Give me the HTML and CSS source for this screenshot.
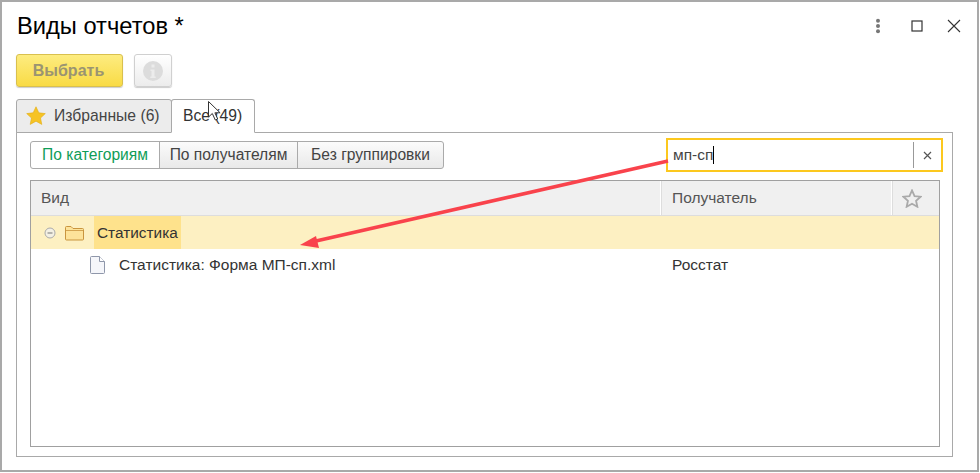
FILE: index.html
```html
<!DOCTYPE html>
<html lang="ru">
<head>
<meta charset="utf-8">
<title>Виды отчетов</title>
<link rel="stylesheet" href="styles.css">
</head>
<body>
<div class="window">
  <header class="titlebar">
    <h1 class="title">Виды отчетов *</h1>
    <div class="win-controls">
      <svg class="win-icon" width="12" height="16" viewBox="0 0 12 16"><circle cx="6" cy="2.700" r="2" fill="#777"/><circle cx="6" cy="8" r="2" fill="#777"/><circle cx="6" cy="13.300" r="2" fill="#777"/></svg>
      <svg class="win-icon icon-max" width="12" height="12" viewBox="0 0 12 12"><rect x="1" y="1" width="10" height="10" fill="none" stroke="#333" stroke-width="1.2"/></svg>
      <svg class="win-icon icon-close" width="14" height="14" viewBox="0 0 14 14"><path d="M1 1L13 13M13 1L1 13" fill="none" stroke="#333" stroke-width="1.1"/></svg>
    </div>
  </header>
  <div class="toolbar">
    <button class="btn-primary">Выбрать</button>
    <button class="btn-info">
      <svg width="20" height="20" viewBox="0 0 20 20"><circle cx="10" cy="10" r="10" fill="#dcdcdc"/><rect x="8.500" y="3.500" width="3" height="3" fill="#ececec"/><path d="M7.500 8.500h4v7h1.200v1.500H7.300v-1.500h1.200v-5.500h-1z" fill="#ececec"/></svg>
    </button>
  </div>
  <div class="tabs">
    <div class="tab tab-inactive">
      <svg width="20" height="20" viewBox="0 0 20 20"><path d="M10 .8l2.800 6 6.500.8-4.800 4.400 1.300 6.400L10 15.200l-5.800 3.200 1.300-6.400L.7 7.600l6.500-.8z" fill="#f6c324" stroke="#e3ac12" stroke-width=".6"/></svg>
      <span>Избранные (6)</span>
    </div>
    <div class="tab tab-active">Все (49)</div>
  </div>
  <section class="panel">
    <div class="filters">
      <div class="segments">
        <div class="seg seg-1 seg-on">По категориям</div>
        <div class="seg seg-2">По получателям</div>
        <div class="seg seg-3">Без группировки</div>
      </div>
      <div class="search">
        <div class="search-text"><span>мп-сп</span><i class="caret"></i></div>
        <div class="search-clear">
          <svg width="9" height="9" viewBox="0 0 9 9"><path d="M1 1L8 8M8 1L1 8" fill="none" stroke="#555" stroke-width="1.200"/></svg>
        </div>
      </div>
    </div>
    <div class="table">
      <div class="thead">
        <div class="th col-kind">Вид</div>
        <div class="th col-to">Получатель</div>
        <div class="th col-star">
          <svg width="20" height="19" viewBox="0 0 22 21"><path d="M11 1.600l2.800 6.200 6.700.7-5 4.500 1.400 6.600L11 16.300l-5.900 3.300 1.400-6.600-5-4.500 6.700-.7z" fill="none" stroke="#aaa" stroke-width="2"/></svg>
        </div>
      </div>
      <div class="row row-group">
        <svg class="toggle" width="12" height="12" viewBox="0 0 12 12"><circle cx="6" cy="6" r="5" fill="#f3f0e4" stroke="#aaa"/><path d="M3.500 6h5" stroke="#777"/></svg>
        <svg class="folder" width="19" height="16" viewBox="0 0 19 16"><path d="M.5 14V2.500q0-1 1-1h4.500l2 2h9.500q1 0 1 1V14q0 1-1 1h-16q-1 0-1-1z" fill="#fde39a" stroke="#c9953f"/><path d="M1 5.500h17" stroke="#c9953f" stroke-width=".8"/></svg>
        <span class="group-name">Статистика</span>
      </div>
      <div class="row row-item">
        <div class="item-kind">
          <svg class="doc" width="15" height="18" viewBox="0 0 15 18"><path d="M.5 1.500q0-1 1-1h8l5 5v11q0 1-1 1h-12q-1 0-1-1z" fill="#f5f6fa" stroke="#8f97aa"/><path d="M9.500.5v5h5" fill="#fff" stroke="#8f97aa"/></svg>
          <span>Статистика: Форма МП-сп.xml</span>
        </div>
        <div class="item-to">Росстат</div>
      </div>
    </div>
  </section>
</div>
<svg class="annotation" width="980" height="473" viewBox="0 0 980 473">
  <path d="M668 161L316 241" stroke="#f9434c" stroke-width="3.600" fill="none"/>
  <path d="M300 245L316 236L319 248z" fill="#f9434c"/>
  <path d="M208.500 101.500V117l3.800-3.500 3 6.500 2.400-1-2.800-6.200h5.200z" fill="#fff" stroke="#333" stroke-width="1"/>
</svg>
</body>
</html>
```
FILE: styles.css
```css
* { box-sizing: border-box; }
html, body { margin: 0; padding: 0; background: #fff; }
body { width: 980px; height: 473px; overflow: hidden; position: relative; font-family: "Liberation Sans", Arial, sans-serif; }
.window { width: 979px; height: 472px; border: 2px solid #a9a9a9; padding: 0 24px 0 14px; background: #fff; }
.titlebar { height: 52px; display: flex; align-items: center; justify-content: space-between; margin-right: -24px; }
.title { margin: 0 0 0 1px; font-weight: 400; font-size: 23.700px; color: #000; position: relative; top: -2px; }
.win-controls { display: flex; align-items: center; padding-right: 16px; position: relative; top: -2px; }
.icon-max { margin-left: 27px; }
.icon-close { margin-left: 24px; }
.toolbar { display: flex; gap: 11px; height: 33px; }
.btn-primary { width: 107px; height: 33px; border: 1px solid #d9c04e; border-radius: 3px; background: linear-gradient(#fdec80, #f9db45); color: #9a9472; font: 700 16px "Liberation Sans", sans-serif; box-shadow: 0 1px 1px #ccc; padding: 0 2px 0 0; }
.btn-info { width: 38px; height: 33px; border: 1px solid #d0d0d0; border-radius: 3px; background: linear-gradient(#fff, #ececec); padding: 0; display: flex; align-items: center; justify-content: center; box-shadow: 0 1px 1px #ccc; }
.tabs { display: flex; margin-top: 12px; height: 34px; position: relative; z-index: 1; }
.tab { height: 34px; border: 1px solid #a9a9a9; border-radius: 3px 3px 0 0; font-size: 15.700px; color: #444; display: flex; align-items: center; padding-bottom: 1px; }
.tab-inactive { width: 156px; background: #ececec; padding-left: 9px; gap: 8px; }
.tab-active { width: 84px; margin-left: -1px; background: #fff; border-bottom-color: #fff; padding-left: 11px; color: #333; }
.panel { width: 937px; height: 325px; margin-top: -1px; border: 1px solid #a9a9a9; padding: 5px 13px 0 13px; }
.filters { display: flex; justify-content: space-between; align-items: flex-start; height: 42px; margin-right: -4px; }
.segments { display: flex; margin-top: 3px; height: 28px; }
.seg { height: 28px; border: 1px solid #aaa; margin-left: -1px; font-size: 15.600px; display: flex; align-items: center; justify-content: center; color: #444; background: linear-gradient(#fbfbfb, #e9e9e9); }
.seg-1 { width: 130px; margin-left: 0; border-radius: 3px 0 0 3px; }
.seg-2 { width: 139px; }
.seg-3 { width: 147px; border-radius: 0 3px 3px 0; }
.seg-on { background: #fff; color: #0f9d58; }
.search { width: 277px; height: 34px; border: 2px solid #fcc81e; display: flex; align-items: center; background: #fff; }
.search-text { flex: 1; font-size: 15.500px; color: #444; padding-left: 5px; display: flex; align-items: center; }
.caret { width: 1px; height: 18px; background: #000; }
.search-clear { width: 28px; height: 26px; border-left: 1px solid #999; display: flex; align-items: center; justify-content: center; }
.table { width: 910px; height: 267px; border: 1px solid #a0a0a0; }
.thead { display: flex; height: 35px; background: #f0f0f0; border-bottom: 1px solid #ddd; }
.th { font-size: 15.500px; color: #555; display: flex; align-items: center; border-right: 1px solid #fff; box-shadow: 1px 0 0 #ddd; }
.col-kind { width: 630px; padding-left: 10px; }
.col-to { width: 231px; padding-left: 11px; }
.col-star { flex: 1; justify-content: flex-start; padding-left: 10px; border: 0; box-shadow: none; }
.row { display: flex; align-items: center; }
.row-group { height: 33px; background: #fdf0c2; }
.toggle { margin-left: 13px; }
.folder { margin-left: 9px; }
.group-name { height: 33px; width: 87px; margin-left: 10px; padding-left: 3px; background: #fee28c; font-size: 15.400px; color: #333; display: flex; align-items: center; }
.row-item { height: 33px; font-size: 15.500px; color: #333; padding-bottom: 1px; }
.item-kind { width: 631px; padding-left: 59px; display: flex; align-items: center; gap: 14px; }
.item-to { padding-left: 10px; }
.annotation { position: absolute; left: 0; top: 0; z-index: 2; pointer-events: none; }
```
